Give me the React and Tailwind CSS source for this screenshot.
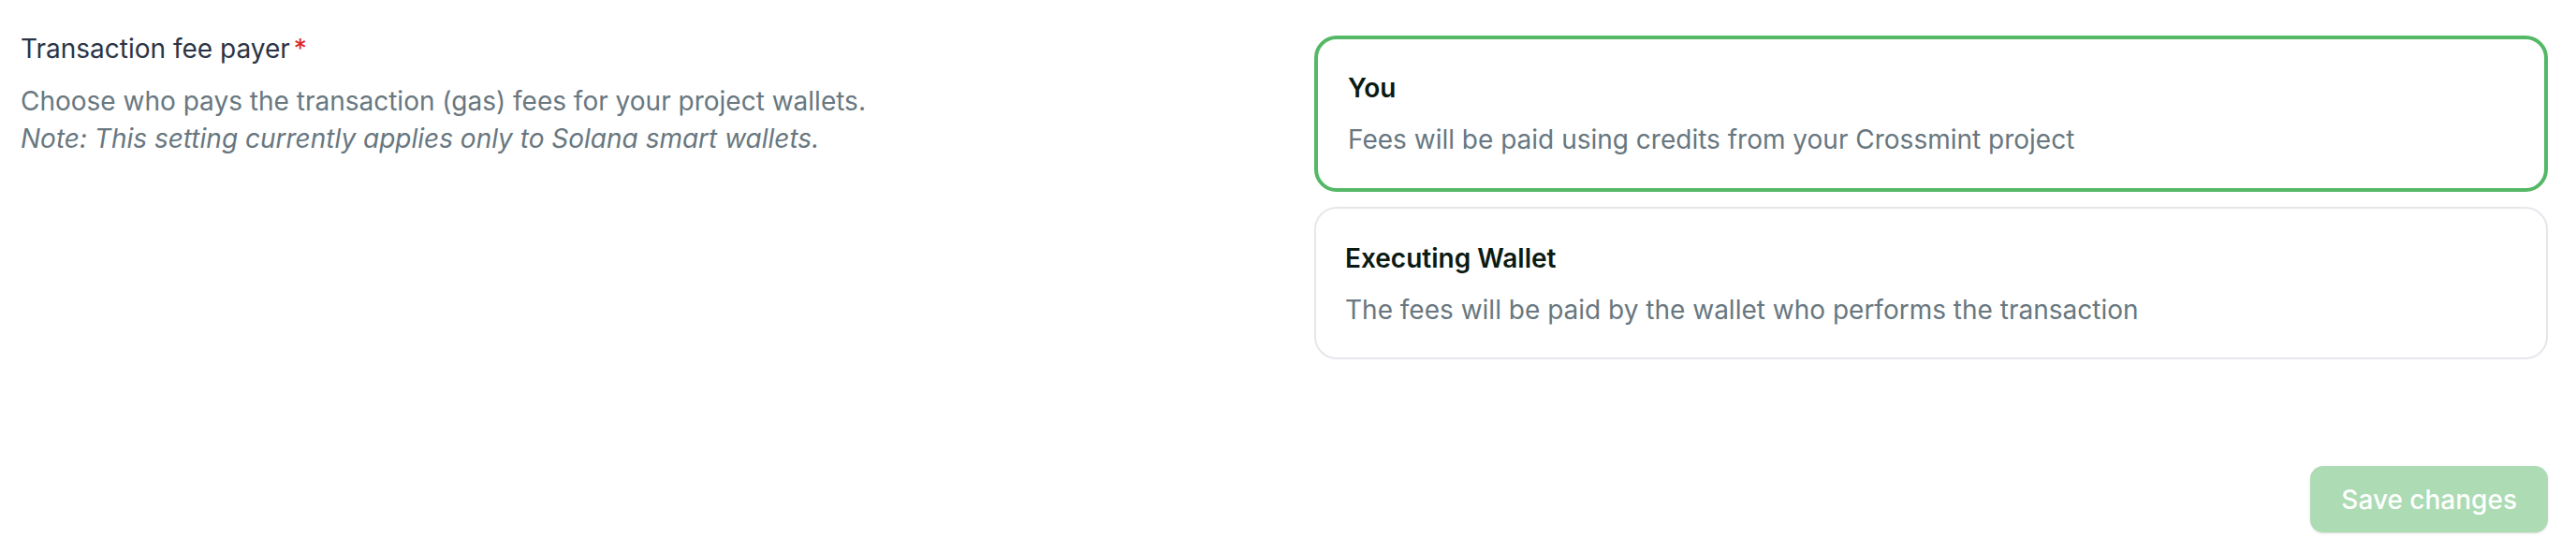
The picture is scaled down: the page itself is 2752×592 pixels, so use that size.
import React, { useState } from 'react';

const options = [
  { id: 'you', title: 'You', text: 'Fees will be paid using credits from your Crossmint project' },
  { id: 'wallet', title: 'Executing Wallet', text: 'The fees will be paid by the wallet who performs the transaction' },
];

export default function App() {
  const [selected, setSelected] = useState('you');

  return (
    <div className="w-[2752px] h-[592px] bg-white flex flex-col pl-[22px] pr-[30px] pt-[32px] font-['Inter',_sans-serif] antialiased">
      <div className="grid grid-cols-2 gap-[64px] items-start">
        <div className="flex flex-col">
          <div className="flex items-center text-[28px] leading-[40px] text-[#2b3445]">
            Transaction fee payer
            <span className="ml-[4px] text-[#dc2626]">*</span>
          </div>
          <p className="mt-[16px] text-[28px] leading-[40px] text-[#687780]">
            Choose who pays the transaction (gas) fees for your project wallets.
            <br />
            <span className="italic">Note: This setting currently applies only to Solana smart wallets.</span>
          </p>
        </div>

        <div className="flex flex-col gap-[16px] pt-[6px]">
          {options.map((o) => {
            const active = selected === o.id;
            return (
              <button
                key={o.id}
                onClick={() => setSelected(o.id)}
                className={
                  active
                    ? 'flex flex-col text-left rounded-[24px] border-[4px] border-[#55b866] bg-white px-[32px] pt-[32px] pb-[32px]'
                    : 'flex flex-col text-left rounded-[24px] border-[2px] border-[#e5e7eb] bg-white px-[31px] pt-[33px] pb-[31px]'
                }
              >
                <span className="text-[28px] leading-[40px] font-semibold text-[#0b1a12]">{o.title}</span>
                <span className="mt-[15px] text-[28px] leading-[40px] text-[#687780]">{o.text}</span>
              </button>
            );
          })}
        </div>
      </div>

      <div className="flex justify-end mt-[114px]">
        <button className="h-[71px] px-[33px] rounded-[14px] bg-[#acdbb4] text-white text-[28px] leading-[40px] font-medium shadow-sm">
          Save changes
        </button>
      </div>
    </div>
  );
}
